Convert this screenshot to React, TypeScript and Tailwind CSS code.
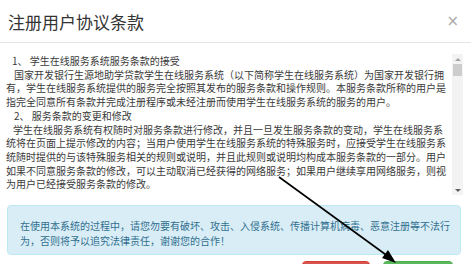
import React from 'react';

const font = "font-['Microsoft_YaHei','Noto_Sans_CJK_SC',sans-serif]";

const lines: { text: string; indent: number }[] = [
  { text: '1、 学生在线服务系统服务条款的接受', indent: 6 },
  { text: '国家开发银行生源地助学贷款学生在线服务系统（以下简称学生在线服务系统）为国家开发银行拥', indent: 8 },
  { text: '有，学生在线服务系统提供的服务完全按照其发布的服务条款和操作规则。本服务条款所称的用户是', indent: 0 },
  { text: '指完全同意所有条款并完成注册程序或未经注册而使用学生在线服务系统的服务的用户。', indent: 0 },
  { text: '2、 服务条款的变更和修改', indent: 8 },
  { text: '学生在线服务系统有权随时对服务条款进行修改，并且一旦发生服务条款的变动，学生在线服务系', indent: 7 },
  { text: '统将在页面上提示修改的内容；当用户使用学生在线服务系统的特殊服务时，应接受学生在线服务系', indent: 0 },
  { text: '统随时提供的与该特殊服务相关的规则或说明，并且此规则或说明均构成本服务条款的一部分。用户', indent: 0 },
  { text: '如果不同意服务条款的修改，可以主动取消已经获得的网络服务；如果用户继续享用网络服务，则视', indent: 0 },
  { text: '为用户已经接受服务条款的修改。', indent: 0 },
];

const FakeScrollbar = () => (
  <div className="w-[11px] shrink-0 bg-[#f3f3f3] flex flex-col items-center">
    <div className="h-[10px] w-full flex items-center justify-center">
      <div className="w-0 h-0 border-l-[3px] border-r-[3px] border-b-[3px] border-l-transparent border-r-transparent border-b-[#a3a3a3]" />
    </div>
    <div className="h-[12px] w-[9px] bg-[#cdcdcd]" />
    <div className="flex-1" />
    <div className="h-[10px] w-full flex items-center justify-center">
      <div className="w-0 h-0 border-l-[3px] border-r-[3px] border-t-[3px] border-l-transparent border-r-transparent border-t-[#606060]" />
    </div>
  </div>
);

export default function App() {
  return (
    <div className={`relative w-[471px] h-[264px] overflow-hidden bg-white ${font}`}>
      {/* header */}
      <div className="h-[43px] flex items-center justify-between pl-[8px] pr-[12px] border-b border-[#e5e5e5]">
        <h4 className="text-[17px] leading-none text-[#333]">注册用户协议条款</h4>
        <span className="text-[15px] leading-none text-[#aaa] font-['DejaVu_Sans',sans-serif]">×</span>
      </div>

      {/* terms box */}
      <div className="mt-[11px] h-[141px] flex pr-[8px]">
        <div className="flex-1 overflow-hidden pl-[6px] text-[10px] leading-[13.7px] text-[#3a3a3a]">
          {lines.map((l, i) => (
            <div key={i} className="whitespace-nowrap" style={{ paddingLeft: l.indent }}>
              {l.text}
            </div>
          ))}
        </div>
        <FakeScrollbar />
      </div>

      {/* notice */}
      <div className="mt-[10px] ml-[7px] mr-[10px] h-[50px] rounded-[4px] border border-[#bce8f1] bg-[#d9edf7] px-[12px] pt-[12px] text-[10px] leading-[15px] text-[#31708f]">
        <div className="whitespace-nowrap">在使用本系统的过程中，请您勿要有破坏、攻击、入侵系统、传播计算机病毒、恶意注册等不法行</div>
        <div className="whitespace-nowrap">为，否则将予以追究法律责任，谢谢您的合作！</div>
      </div>

      {/* buttons */}
      <div className="mt-[6px] flex justify-end gap-[13px] pr-[18px]">
        <div className="w-[68px] h-[24px] rounded-[4px] bg-[#d9534f] border border-[#d43f3a]" />
        <div className="w-[70px] h-[24px] rounded-[4px] bg-[#5cb85c] border border-[#4cae4c]" />
      </div>

      {/* annotation arrow */}
      <svg className="absolute inset-0 pointer-events-none" width="471" height="264" viewBox="0 0 471 264">
        <line x1="279" y1="177" x2="389" y2="257" stroke="#000" strokeWidth="1.6" />
        <polygon points="396,263 382,258 388,250" fill="#000" />
      </svg>
    </div>
  );
}
